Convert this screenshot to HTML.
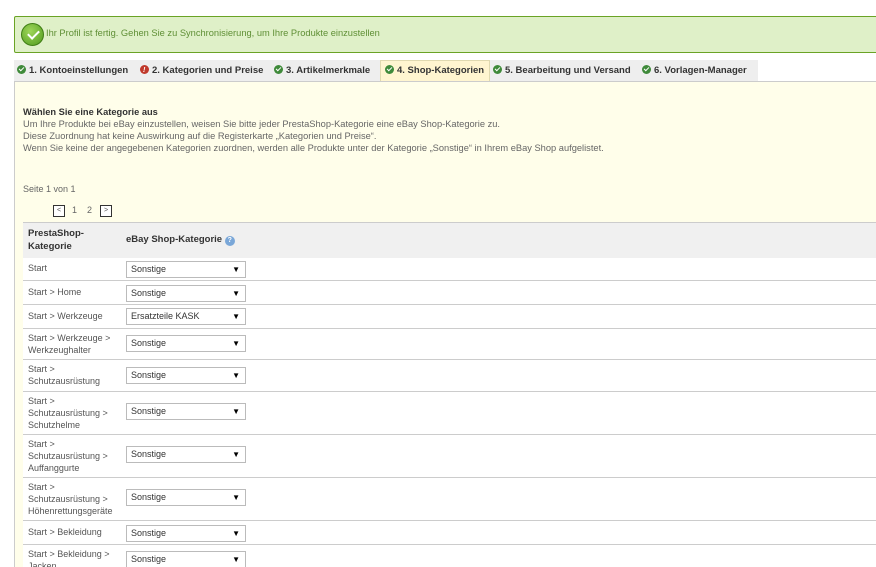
<!DOCTYPE html>
<html><head><meta charset="utf-8"><style>
*{box-sizing:border-box;margin:0;padding:0}
html,body{width:876px;height:567px;overflow:hidden}
body{background:#fff;font-family:"Liberation Sans",sans-serif;font-size:9px;color:#555;position:relative}
.abs{position:absolute}
.alert{left:14px;top:16px;width:880px;height:37px;background:#dff0c8;border:1px solid #6aa325;border-radius:2px}
.alert .ic{position:absolute;left:6px;top:6px;width:23px;height:23px;border-radius:50%;background:radial-gradient(circle at 40% 35%,#9fd65a,#4f9a1c);border:1px solid #3f7d14}
.alert .ic:after{content:"";position:absolute;left:6px;top:6px;width:9px;height:5px;border-left:2.5px solid #fff;border-bottom:2.5px solid #fff;transform:rotate(-45deg)}
.alert span{position:absolute;left:31px;top:11px;color:#5f8f35;font-size:9.3px}
.tabs{left:14px;top:60px;width:744px;height:21px;background:#eee}
.tab{position:absolute;top:0;height:21px;line-height:21px;font-weight:bold;color:#333;font-size:9.5px;white-space:nowrap}
.tab i{display:inline-block;width:9px;height:9px;border-radius:50%;background:#3f8a3a;vertical-align:-1px;margin-right:3px;position:relative}
.tab i.r{background:#c0392b}
.tab i:after{content:"";position:absolute;left:2px;top:2px;width:4px;height:2px;border-left:1.3px solid #fff;border-bottom:1.3px solid #fff;transform:rotate(-45deg)}
.tab i.r:after{content:"!";border:0;transform:none;color:#fff;font-size:7px;left:3px;top:-5px;width:auto;height:auto}
.panel{left:14px;top:81px;width:870px;height:500px;background:#fffeea;border-left:1px solid #ccc;border-top:1px solid #ccc}
.intro{left:23px;top:106px;font-size:9.3px;line-height:12px;color:#666;white-space:nowrap}
.intro b{color:#333}
.row{position:absolute;left:0;width:860px;border-bottom:1px solid #ccc;background:#fff}
.row .c{position:absolute;left:5px;font-size:9px;line-height:12px;color:#555;white-space:nowrap}
.sel{position:absolute;left:103px;width:120px;height:17px;border:1px solid #bbb;background:#fff;font-size:9px;line-height:15px;padding-left:4px;color:#333}
.sel:after{content:"▼";position:absolute;right:5px;top:0;font-size:8px;color:#000}
</style></head><body>
<div class="abs alert"><div class="ic"></div><span>Ihr Profil ist fertig. Gehen Sie zu Synchronisierung, um Ihre Produkte einzustellen</span></div>
<div class="abs tabs">
<div class="tab" style="left:3px"><i></i>1. Kontoeinstellungen</div>
<div class="tab" style="left:126px"><i class="r"></i>2. Kategorien und Preise</div>
<div class="tab" style="left:260px"><i></i>3. Artikelmerkmale</div>
<div class="tab" style="left:366px;width:110px;background:#fff5d0;border:1px solid #e0d9b0;border-bottom:0;padding-left:4px;line-height:20px"><i></i>4. Shop-Kategorien</div>
<div class="tab" style="left:479px"><i></i>5. Bearbeitung und Versand</div>
<div class="tab" style="left:628px"><i></i>6. Vorlagen-Manager</div>
</div>
<div class="abs panel"></div>
<div class="abs intro"><b>Wählen Sie eine Kategorie aus</b><br>Um Ihre Produkte bei eBay einzustellen, weisen Sie bitte jeder PrestaShop-Kategorie eine eBay Shop-Kategorie zu.<br>Diese Zuordnung hat keine Auswirkung auf die Registerkarte „Kategorien und Preise“.<br>Wenn Sie keine der angegebenen Kategorien zuordnen, werden alle Produkte unter der Kategorie „Sonstige“ in Ihrem eBay Shop aufgelistet.</div>
<div class="abs" style="left:23px;top:184px;font-size:9px;color:#666">Seite 1 von 1</div>
<div class="abs" style="left:53px;top:205px;width:12px;height:12px;border:1px solid #333;font-size:7px;text-align:center;line-height:10px;background:#fff">&lt;</div>
<div class="abs" style="left:72px;top:205px;font-size:9px;color:#666">1</div>
<div class="abs" style="left:87px;top:205px;font-size:9px;color:#666">2</div>
<div class="abs" style="left:100px;top:205px;width:12px;height:12px;border:1px solid #333;font-size:7px;text-align:center;line-height:10px;background:#fff">&gt;</div>
<div class="abs" style="left:23px;top:222px;width:860px;height:36px;background:#f0f0f0;border-top:1px solid #ccc"></div>
<div class="abs" style="left:28px;top:227px;font-weight:bold;color:#333;font-size:9.5px;line-height:13px">PrestaShop-<br>Kategorie</div>
<div class="abs" style="left:126px;top:234px;font-weight:bold;color:#333;font-size:9.5px">eBay Shop-Kategorie <span style="display:inline-block;width:10px;height:10px;border-radius:50%;background:#7aa7d8;color:#fff;font-size:7px;text-align:center;line-height:10px;vertical-align:0">?</span></div>
<div class="abs" style="left:23px;top:258px">
<div class="row" style="top:0;height:23px"><div class="c" style="top:4px">Start</div><div class="sel" style="top:3px">Sonstige</div></div>
<div class="row" style="top:23px;height:24px"><div class="c" style="top:5px">Start &gt; Home</div><div class="sel" style="top:4px">Sonstige</div></div>
<div class="row" style="top:47px;height:24px"><div class="c" style="top:5px">Start &gt; Werkzeuge</div><div class="sel" style="top:3px">Ersatzteile KASK</div></div>
<div class="row" style="top:71px;height:31px"><div class="c" style="top:3px">Start &gt; Werkzeuge &gt;<br>Werkzeughalter</div><div class="sel" style="top:6px">Sonstige</div></div>
<div class="row" style="top:102px;height:32px"><div class="c" style="top:3px">Start &gt;<br>Schutzausrüstung</div><div class="sel" style="top:7px">Sonstige</div></div>
<div class="row" style="top:134px;height:43px"><div class="c" style="top:3px">Start &gt;<br>Schutzausrüstung &gt;<br>Schutzhelme</div><div class="sel" style="top:11px">Sonstige</div></div>
<div class="row" style="top:177px;height:43px"><div class="c" style="top:3px">Start &gt;<br>Schutzausrüstung &gt;<br>Auffanggurte</div><div class="sel" style="top:11px">Sonstige</div></div>
<div class="row" style="top:220px;height:43px"><div class="c" style="top:3px">Start &gt;<br>Schutzausrüstung &gt;<br>Höhenrettungsgeräte</div><div class="sel" style="top:11px">Sonstige</div></div>
<div class="row" style="top:263px;height:24px"><div class="c" style="top:5px">Start &gt; Bekleidung</div><div class="sel" style="top:4px">Sonstige</div></div>
<div class="row" style="top:287px;height:40px;border:0"><div class="c" style="top:3px">Start &gt; Bekleidung &gt;<br>Jacken</div><div class="sel" style="top:6px">Sonstige</div></div>
</div>
</body></html>
